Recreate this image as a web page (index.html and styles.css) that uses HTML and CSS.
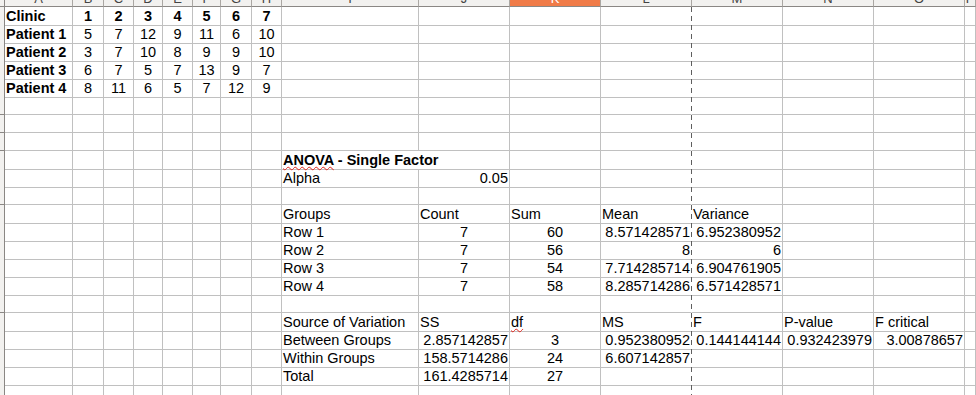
FILE: index.html
```html
<!DOCTYPE html>
<html>
<head>
<meta charset="utf-8">
<link rel="stylesheet" href="styles.css">
</head>
<body>
<div class="sheet">
<div class="row hdr"><div class="rh"></div><div><span>A</span></div><div><span>B</span></div><div><span>C</span></div><div><span>D</span></div><div><span>E</span></div><div><span>F</span></div><div><span>G</span></div><div><span>H</span></div><div><span>I</span></div><div><span>J</span></div><div class="sel"><span>K</span></div><div><span>L</span></div><div><span>M</span></div><div><span>N</span></div><div><span>O</span></div><div><span>P</span></div></div>
<div class="row"><div class="rh"></div><div class="b">Clinic</div><div class="b ctr">1</div><div class="b ctr">2</div><div class="b ctr">3</div><div class="b ctr">4</div><div class="b ctr">5</div><div class="b ctr">6</div><div class="b ctr">7</div><div></div><div></div><div></div><div class="pb"></div><div></div><div></div><div></div><div></div></div>
<div class="row"><div class="rh"></div><div class="b">Patient 1</div><div class="ctr">5</div><div class="ctr">7</div><div class="ctr">12</div><div class="ctr">9</div><div class="ctr">11</div><div class="ctr">6</div><div class="ctr">10</div><div></div><div></div><div></div><div class="pb"></div><div></div><div></div><div></div><div></div></div>
<div class="row"><div class="rh"></div><div class="b">Patient 2</div><div class="ctr">3</div><div class="ctr">7</div><div class="ctr">10</div><div class="ctr">8</div><div class="ctr">9</div><div class="ctr">9</div><div class="ctr">10</div><div></div><div></div><div></div><div class="pb"></div><div></div><div></div><div></div><div></div></div>
<div class="row"><div class="rh"></div><div class="b">Patient 3</div><div class="ctr">6</div><div class="ctr">7</div><div class="ctr">5</div><div class="ctr">7</div><div class="ctr">13</div><div class="ctr">9</div><div class="ctr">7</div><div></div><div></div><div></div><div class="pb"></div><div></div><div></div><div></div><div></div></div>
<div class="row"><div class="rh"></div><div class="b">Patient 4</div><div class="ctr">8</div><div class="ctr">11</div><div class="ctr">6</div><div class="ctr">5</div><div class="ctr">7</div><div class="ctr">12</div><div class="ctr">9</div><div></div><div></div><div></div><div class="pb"></div><div></div><div></div><div></div><div></div></div>
<div class="row"><div class="rh"></div><div></div><div></div><div></div><div></div><div></div><div></div><div></div><div></div><div></div><div></div><div></div><div class="pb"></div><div></div><div></div><div></div><div></div></div>
<div class="row"><div class="rh"></div><div></div><div></div><div></div><div></div><div></div><div></div><div></div><div></div><div></div><div></div><div></div><div class="pb"></div><div></div><div></div><div></div><div></div></div>
<div class="row"><div class="rh"></div><div></div><div></div><div></div><div></div><div></div><div></div><div></div><div></div><div></div><div></div><div></div><div class="pb"></div><div></div><div></div><div></div><div></div></div>
<div class="row"><div class="rh"></div><div></div><div></div><div></div><div></div><div></div><div></div><div></div><div></div><div class="b span2"><span class="sp">ANOVA</span> - Single Factor</div><div></div><div class="pb"></div><div></div><div></div><div></div><div></div></div>
<div class="row"><div class="rh"></div><div></div><div></div><div></div><div></div><div></div><div></div><div></div><div></div><div>Alpha</div><div class="rt">0.05</div><div></div><div class="pb"></div><div></div><div></div><div></div><div></div></div>
<div class="row"><div class="rh"></div><div></div><div></div><div></div><div></div><div></div><div></div><div></div><div></div><div></div><div></div><div></div><div class="pb"></div><div></div><div></div><div></div><div></div></div>
<div class="row"><div class="rh"></div><div></div><div></div><div></div><div></div><div></div><div></div><div></div><div></div><div>Groups</div><div>Count</div><div>Sum</div><div class="pb">Mean</div><div>Variance</div><div></div><div></div><div></div></div>
<div class="row"><div class="rh"></div><div></div><div></div><div></div><div></div><div></div><div></div><div></div><div></div><div>Row 1</div><div class="ctr">7</div><div class="ctr">60</div><div class="pb rt">8.571428571</div><div class="rt">6.952380952</div><div></div><div></div><div></div></div>
<div class="row"><div class="rh"></div><div></div><div></div><div></div><div></div><div></div><div></div><div></div><div></div><div>Row 2</div><div class="ctr">7</div><div class="ctr">56</div><div class="pb rt">8</div><div class="rt">6</div><div></div><div></div><div></div></div>
<div class="row"><div class="rh"></div><div></div><div></div><div></div><div></div><div></div><div></div><div></div><div></div><div>Row 3</div><div class="ctr">7</div><div class="ctr">54</div><div class="pb rt">7.714285714</div><div class="rt">6.904761905</div><div></div><div></div><div></div></div>
<div class="row"><div class="rh"></div><div></div><div></div><div></div><div></div><div></div><div></div><div></div><div></div><div>Row 4</div><div class="ctr">7</div><div class="ctr">58</div><div class="pb rt">8.285714286</div><div class="rt">6.571428571</div><div></div><div></div><div></div></div>
<div class="row"><div class="rh"></div><div></div><div></div><div></div><div></div><div></div><div></div><div></div><div></div><div></div><div></div><div></div><div class="pb"></div><div></div><div></div><div></div><div></div></div>
<div class="row"><div class="rh"></div><div></div><div></div><div></div><div></div><div></div><div></div><div></div><div></div><div>Source of Variation</div><div>SS</div><div><span class="sp">df</span></div><div class="pb">MS</div><div>F</div><div>P-value</div><div>F critical</div><div></div></div>
<div class="row"><div class="rh"></div><div></div><div></div><div></div><div></div><div></div><div></div><div></div><div></div><div>Between Groups</div><div class="rt">2.857142857</div><div class="ctr">3</div><div class="pb rt">0.952380952</div><div class="rt">0.144144144</div><div class="rt">0.932423979</div><div class="rt">3.00878657</div><div></div></div>
<div class="row"><div class="rh"></div><div></div><div></div><div></div><div></div><div></div><div></div><div></div><div></div><div>Within Groups</div><div class="rt">158.5714286</div><div class="ctr">24</div><div class="pb rt">6.607142857</div><div></div><div></div><div></div><div></div></div>
<div class="row"><div class="rh"></div><div></div><div></div><div></div><div></div><div></div><div></div><div></div><div></div><div>Total</div><div class="rt">161.4285714</div><div class="ctr">27</div><div class="pb"></div><div></div><div></div><div></div><div></div></div>
<div class="row"><div class="rh"></div><div></div><div></div><div></div><div></div><div></div><div></div><div></div><div></div><div></div><div></div><div></div><div class="pb"></div><div></div><div></div><div></div><div></div></div>
</div>
</body>
</html>
```

FILE: styles.css
```css
html, body {
  margin: 0;
  padding: 0;
  background: #ffffff;
}

body {
  width: 976px;
  height: 395px;
  overflow: hidden;
  font-family: "Liberation Sans", Arial, sans-serif;
  font-size: 14.5px;
  color: #000000;
}

.sheet {
  display: flex;
  flex-direction: column;
}

.row {
  display: grid;
  grid-template-columns: 5px 68px 31px 30px 29px 30px 28px 31px 30px 137px repeat(6, 91px) 1fr;
  height: 18px;
}

.row > div {
  box-sizing: border-box;
  border-right: 1px solid #c0c0c0;
  border-bottom: 1px solid #c0c0c0;
  padding: 1px 1px 0 1px;
  line-height: 17px;
  white-space: nowrap;
  overflow: visible;
}

.row > .rh {
  background: #f2f1ef;
  border-right-color: #8a8784;
  border-bottom-color: #8a8784;
  padding: 0;
}

.hdr {
  height: 7px;
}

.hdr > div {
  background: #f2f1ef;
  border-right-color: #aaa7a3;
  border-bottom-color: #8a8784;
  overflow: hidden;
  text-align: center;
  font-size: 13px;
  color: #444444;
  padding: 0;
}

.hdr > div > span {
  display: block;
  line-height: 14px;
  margin-top: -8px;
}

.hdr > .sel {
  background: #f07b48;
  color: #ffffff;
}

.b {
  font-weight: bold;
}

.ctr {
  text-align: center;
}

.rt {
  text-align: right;
}

.span2 {
  grid-column: span 2;
}

.row > .pb {
  border-right-color: transparent;
  background-image: repeating-linear-gradient(to bottom, #5e5e5e 0, #5e5e5e 5px, transparent 5px, transparent 9px);
  background-size: 1px 100%;
  background-position: right top;
  background-origin: border-box;
  background-repeat: no-repeat;
}

.sp {
  text-decoration: underline wavy #e0231b;
  text-decoration-thickness: 1px;
}
```
